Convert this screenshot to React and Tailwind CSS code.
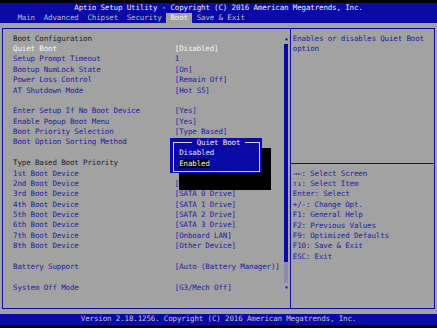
import React from 'react';

const ROW = 'h-[10.39px] leading-[10.39px]';

const rows = [
  { l: 'Boot Configuration', k: 'head' },
  { l: 'Quiet Boot', v: '[Disabled]', k: 'sel' },
  { l: 'Setup Prompt Timeout', v: '1' },
  { l: 'Bootup NumLock State', v: '[On]' },
  { l: 'Power Loss Control', v: '[Remain Off]' },
  { l: 'AT Shutdown Mode', v: '[Hot S5]' },
  {},
  { l: 'Enter Setup If No Boot Device', v: '[Yes]' },
  { l: 'Enable Popup Boot Menu', v: '[Yes]' },
  { l: 'Boot Priority Selection', v: '[Type Based]' },
  { l: 'Boot Option Sorting Method' },
  {},
  { l: 'Type Based Boot Priority', k: 'head' },
  { l: '1st Boot Device' },
  { l: '2nd Boot Device', v: '[' },
  { l: '3rd Boot Device', v: '[SATA 0 Drive]' },
  { l: '4th Boot Device', v: '[SATA 1 Drive]' },
  { l: '5th Boot Device', v: '[SATA 2 Drive]' },
  { l: '6th Boot Device', v: '[SATA 3 Drive]' },
  { l: '7th Boot Device', v: '[Onboard LAN]' },
  { l: '8th Boot Device', v: '[Other Device]' },
  {},
  { l: 'Battery Support', v: '[Auto (Battery Manager)]' },
  {},
  { l: 'System Off Mode', v: '[G3/Mech Off]' },
];

const help = [
  '\u2192\u2190: Select Screen',
  '\u2191\u2193: Select Item',
  'Enter: Select',
  '+/-: Change Opt.',
  'F1: General Help',
  'F2: Previous Values',
  'F9: Optimized Defaults',
  'F10: Save & Exit',
  'ESC: Exit',
];

export default function App() {
  return (
    <div className="relative w-[437px] h-[328px] overflow-hidden bg-black pt-[2.6px] font-['DejaVu_Sans_Mono','Liberation_Mono',monospace] text-[7.5px] tracking-[-0.145px] whitespace-pre">
      {/* header */}
      <div className="bg-[#0a0aa6]">
        <div className={`${ROW} text-center text-[#ececf4]`}>
          Aptio Setup Utility - Copyright (C) 2016 American Megatrends, Inc.
        </div>
        <div className={`${ROW} flex pl-[13.11px] text-[#bcbcc6]`}>
          <span> Main  Advanced  Chipset  Security </span>
          <span className="bg-[#a2a2a2] text-[#f0f0f0]"> Boot </span>
          <span> Save &amp; Exit</span>
        </div>
      </div>

      {/* body */}
      <div className="h-[290.92px] bg-[#a2a2a2] pt-[4.7px] px-[1.7px]">
        <div className="h-[281px] border border-[#0a0aa6] flex">
          {/* left panel */}
          <div className="w-[281.35px] pt-[4.67px] pl-[10.41px]">
            {rows.map((r, i) => (
              <div key={i} className={`${ROW} flex`}>
                <span
                  className={`w-[161.69px] shrink-0 ${
                    r.k === 'head'
                      ? 'text-[#1c1c28]'
                      : r.k === 'sel'
                      ? 'text-[#f6f6f6]'
                      : 'text-[#1c1ca4]'
                  }`}
                >
                  {r.l || ''}
                </span>
                <span className={r.k === 'sel' ? 'text-[#f6f6f6]' : 'text-[#1c1ca4]'}>
                  {r.v || ''}
                </span>
              </div>
            ))}
          </div>

          {/* scrollbar */}
          <div className="w-[4.37px] pt-[4.67px] flex flex-col items-center">
            <div className={`${ROW} flex items-center justify-center text-[4.5px] text-[#0a0aa6]`}>▲</div>
            <div className="h-[218.19px] w-[4px] bg-[#0a0aa6]" />
            <div className="h-[20.78px] w-[4px] bg-[#8a8ab4]" />
            <div className={`${ROW} flex items-center justify-center text-[4.5px] text-[#0a0aa6]`}>▼</div>
          </div>

          {/* divider */}
          <div className="ml-[1.7px] w-[1px] bg-[#0a0aa6]" />

          {/* right panel */}
          <div className="flex-1 pt-[4.67px] text-[#1c1ca4]">
            <div className={`${ROW} pl-[1.7px]`}>Enables or disables Quiet Boot</div>
            <div className={`${ROW} pl-[1.7px]`}>option</div>
            <div className="h-[103.9px]" />
            <div className={`${ROW} flex items-center`}>
              <div className="w-full h-[1px] bg-[#0a0aa6]" />
            </div>
            {help.map((h) => (
              <div key={h} className={`${ROW} pl-[1.7px]`}>
                {h}
              </div>
            ))}
          </div>
        </div>
      </div>

      {/* footer */}
      <div className={`${ROW} bg-[#0a0aa6] text-center text-[#c4c4cc]`}>
        Version 2.18.1256. Copyright (C) 2016 American Megatrends, Inc.
      </div>

      {/* popup shadow */}
      <div className="absolute left-[179.17px] top-[148.1px] w-[91.77px] h-[41.5px] bg-black" />

      {/* popup */}
      <div className="absolute left-[170.43px] top-[137.7px] w-[91.77px] h-[35.6px] bg-[#0a0aa6] pt-[4.8px] pl-[2.3px] pr-[1.8px]">
        <div className="border border-[#d4d4dc] pb-[2.3px]">
          <div className={`${ROW} -mt-[5.7px] pl-[18.55px]`}>
            <span className="bg-[#0a0aa6] text-[#ececf4]"> Quiet Boot </span>
          </div>
          <div className={`${ROW} pl-[5.44px] text-[#e4e4ec]`}>Disabled</div>
          <div className={`${ROW} pl-[5.44px]`}>
            <span className="bg-black text-[#f6f6f6]">Enabled</span>
          </div>
        </div>
      </div>
    </div>
  );
}
